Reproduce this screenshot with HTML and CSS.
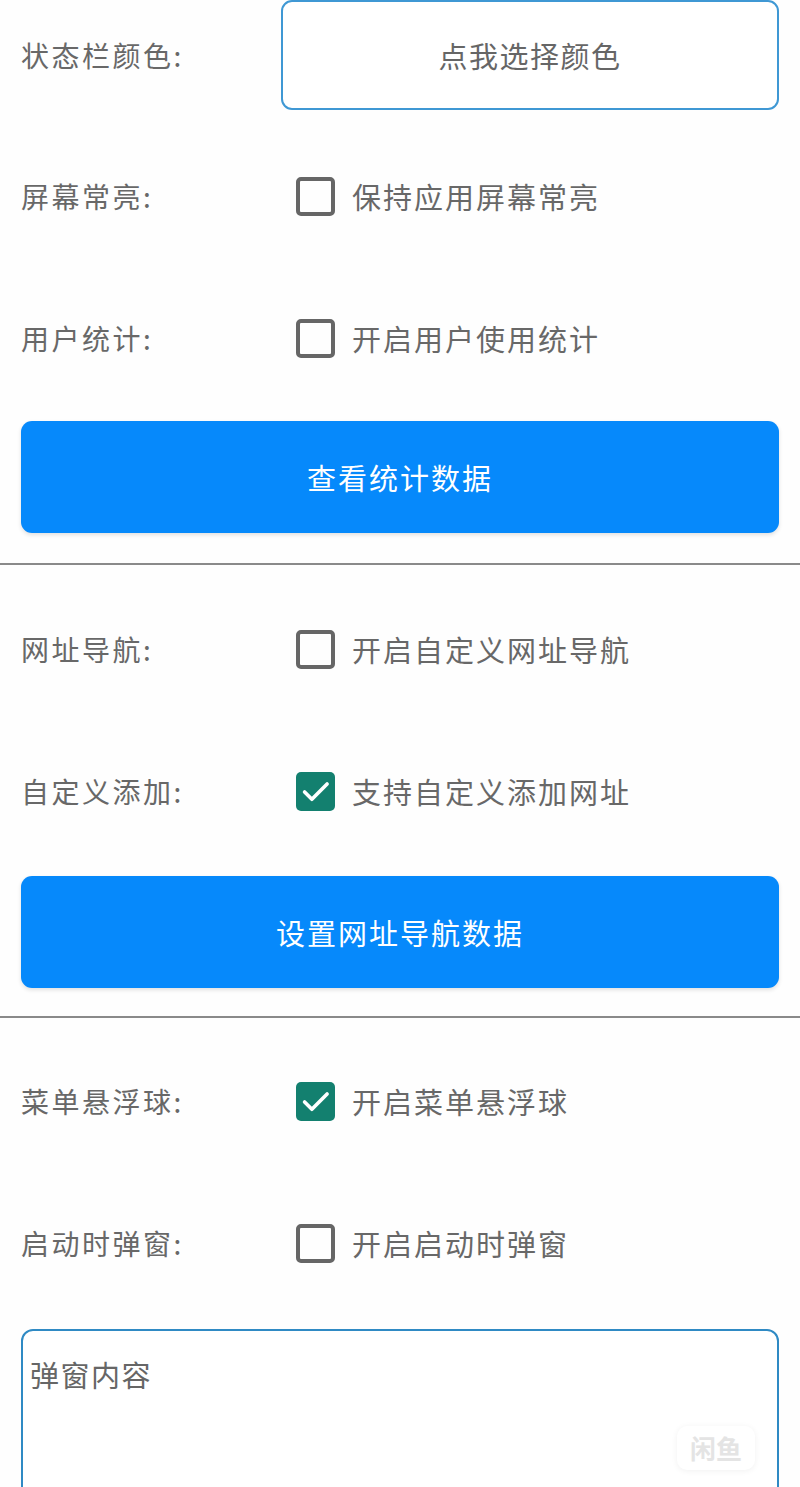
FILE: index.html
```html
<!DOCTYPE html>
<html>
  <head>
    <meta charset="UTF-8" />
    <title>设置</title>
    <link rel="stylesheet" href="styles.css">
  </head>
  <body>
    <main id="settings">
      <section class="group group-first">
        <div class="row row-color">
          <div class="label">状态栏颜色:</div>
          <button class="color-button">点我选择颜色</button>
        </div>
        <div class="row">
          <div class="label">屏幕常亮:</div>
          <label class="check"><span class="box"></span>保持应用屏幕常亮</label>
        </div>
        <div class="row">
          <div class="label">用户统计:</div>
          <label class="check"><span class="box"></span>开启用户使用统计</label>
        </div>
        <button class="big-button">查看统计数据</button>
      </section>

      <hr class="sep" />

      <section class="group group-nav">
        <div class="row">
          <div class="label">网址导航:</div>
          <label class="check"><span class="box"></span>开启自定义网址导航</label>
        </div>
        <div class="row">
          <div class="label">自定义添加:</div>
          <label class="check"><span class="box checked">
            <svg viewBox="0 0 24 24"><path d="M4.8 12.6l4.6 4.6 9.6-9.6" /></svg>
          </span>支持自定义添加网址</label>
        </div>
        <button class="big-button">设置网址导航数据</button>
      </section>

      <hr class="sep" />

      <section class="group group-last">
        <div class="row">
          <div class="label">菜单悬浮球:</div>
          <label class="check"><span class="box checked">
            <svg viewBox="0 0 24 24"><path d="M4.8 12.6l4.6 4.6 9.6-9.6" /></svg>
          </span>开启菜单悬浮球</label>
        </div>
        <div class="row">
          <div class="label">启动时弹窗:</div>
          <label class="check"><span class="box"></span>开启启动时弹窗</label>
        </div>
        <div class="text-box">
          <div class="placeholder">弹窗内容</div>
          <div class="watermark">闲鱼</div>
        </div>
      </section>
    </main>
  </body>
</html>
```

FILE: styles.css
```css
body {
  margin: 0;
  background: #fefefe;
  font-family: "Noto Sans CJK SC", "Noto Sans", sans-serif;
  color: #686868;
}

main {
  width: 800px;
}

.group {
  display: flex;
  flex-direction: column;
  padding: 13px 21px 28px 21px;
}

.group-first {
  padding-top: 0;
  padding-bottom: 30px;
}

.group-nav .big-button {
  margin-top: 14px;
}

.group-last {
  padding-top: 12px;
}

.row {
  display: flex;
  align-items: center;
  height: 142px;
}

.row-color {
  height: 110px;
  margin-bottom: 15px;
}

.label {
  width: 260px;
  font-size: 28px;
  letter-spacing: 2.5px;
}

.color-button {
  width: 498px;
  height: 110px;
  border: 2px solid #3f98d4;
  border-radius: 11px;
  background: #ffffff;
  color: #666666;
  font-family: inherit;
  font-size: 29px;
  letter-spacing: 1.5px;
  padding: 0;
}

.check {
  display: flex;
  align-items: center;
  margin-left: 15px;
  font-size: 29px;
  letter-spacing: 2px;
}

.box {
  box-sizing: border-box;
  width: 39px;
  height: 39px;
  border: 4px solid #666666;
  border-radius: 5px;
  margin-right: 17px;
  display: flex;
  align-items: center;
  justify-content: center;
}

.box.checked {
  border: none;
  background-color: #13806f;
}

.box svg {
  width: 38px;
  height: 38px;
}

.box svg path {
  fill: none;
  stroke: white;
  stroke-width: 2.3;
  stroke-linecap: round;
  stroke-linejoin: round;
}

.big-button {
  margin-top: 12px;
  height: 112px;
  border: none;
  border-radius: 11px;
  background-color: #0689fb;
  color: white;
  font-family: inherit;
  font-size: 29px;
  letter-spacing: 2px;
  box-shadow: 0 2px 4px rgba(0, 0, 0, 0.12);
}

.sep {
  margin: 0;
  border: none;
  height: 2px;
  background-color: #8a8a8a;
}

.text-box {
  position: relative;
  margin-top: 15px;
  height: 220px;
  border: 2px solid #2f8ac4;
  border-radius: 12px;
  background: #ffffff;
}

.placeholder {
  padding: 22px 0 0 7px;
  font-size: 29px;
  letter-spacing: 1.5px;
  color: #666666;
}

.watermark {
  position: absolute;
  left: 654px;
  top: 95px;
  width: 78px;
  height: 44px;
  border-radius: 10px;
  background: #ffffff;
  box-shadow: 0 1px 6px rgba(0, 0, 0, 0.06);
  color: #e4e4e4;
  font-size: 26px;
  font-weight: bold;
  text-align: center;
  line-height: 44px;
}
```
